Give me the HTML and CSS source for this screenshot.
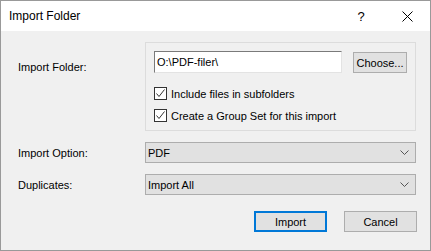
FILE: index.html
```html
<!DOCTYPE html>
<html lang="en">
<head>
    <meta charset="UTF-8">
    <title>Import Folder</title>
    <link rel="stylesheet" href="styles.css">
</head>
<body>

<div class="dialog">
    <div class="titlebar">
        <span class="title">Import Folder</span>
        <span class="tb-btn">?</span>
        <span class="tb-btn">
            <svg width="11" height="11" viewBox="0 0 11 11"><path d="M0.5 0.5 L10.5 10.5 M10.5 0.5 L0.5 10.5" stroke="#000" stroke-width="1" fill="none"/></svg>
        </span>
    </div>

    <div class="content">
        <div class="row">
            <label class="label folder-label">Import Folder:</label>
            <div class="panel">
                <div class="path-row">
                    <input class="textbox" type="text" value="O:\PDF-filer\">
                    <button class="btn choose">Choose...</button>
                </div>
                <div class="check first">
                    <span class="box"><svg width="11" height="11" viewBox="0 0 11 11"><path d="M1.5 5.5 L4 8.5 L9.5 1.5" stroke="#333" stroke-width="1" fill="none"/></svg></span>
                    <span>Include files in subfolders</span>
                </div>
                <div class="check">
                    <span class="box"><svg width="11" height="11" viewBox="0 0 11 11"><path d="M1.5 5.5 L4 8.5 L9.5 1.5" stroke="#333" stroke-width="1" fill="none"/></svg></span>
                    <span>Create a Group Set for this import</span>
                </div>
            </div>
        </div>

        <div class="row combo-row">
            <label class="label">Import Option:</label>
            <div class="combo">
                <span>PDF</span>
                <svg width="9" height="5" viewBox="0 0 9 5"><path d="M0.5 0.5 L4.5 4.5 L8.5 0.5" stroke="#555" stroke-width="1" fill="none"/></svg>
            </div>
        </div>

        <div class="row combo-row second">
            <label class="label">Duplicates:</label>
            <div class="combo">
                <span>Import All</span>
                <svg width="9" height="5" viewBox="0 0 9 5"><path d="M0.5 0.5 L4.5 4.5 L8.5 0.5" stroke="#555" stroke-width="1" fill="none"/></svg>
            </div>
        </div>

        <div class="buttons">
            <button class="btn default">Import</button>
            <button class="btn">Cancel</button>
        </div>
    </div>
</div>

</body>
</html>
```

FILE: styles.css
```css
body {
    margin: 0;
    font-family: "Liberation Sans", Arial, sans-serif;
    font-size: 11px;
    color: #000;
}
.dialog {
    width: 431px;
    height: 251px;
    box-sizing: border-box;
    border: 1px solid #999;
    display: flex;
    flex-direction: column;
    background-color: #f0f0f0;
}
.titlebar {
    height: 30px;
    background-color: #fff;
    display: flex;
    align-items: center;
}
.title {
    flex: 1;
    padding-left: 8px;
    font-size: 12px;
}
.tb-btn {
    width: 46px;
    height: 30px;
    display: flex;
    align-items: center;
    justify-content: center;
    font-size: 13px;
}
.content {
    flex: 1;
    padding: 11px 14px 0 17px;
}
.row {
    display: flex;
}
.label {
    width: 127px;
    line-height: 16px;
}
.folder-label {
    padding-top: 17px;
}
.panel {
    width: 271px;
    height: 89px;
    box-sizing: border-box;
    border: 1px solid #dcdcdc;
    padding: 8px 0 0 8px;
}
.path-row {
    display: flex;
    gap: 11px;
}
.textbox {
    width: 188px;
    height: 22px;
    box-sizing: border-box;
    margin: 0;
    padding: 0 2px;
    border: 1px solid;
    border-color: #7a7a7a #e3e3e3 #e3e3e3 #7a7a7a;
    font-family: inherit;
    font-size: inherit;
    background-color: #fff;
    outline: none;
}
.btn {
    height: 21px;
    box-sizing: border-box;
    margin: 0;
    padding: 0;
    border: 1px solid #adadad;
    background-color: #e1e1e1;
    font-family: inherit;
    font-size: inherit;
    color: #000;
}
.choose {
    width: 54px;
    margin-top: 1px;
}
.check {
    display: flex;
    align-items: center;
    gap: 4px;
    height: 13px;
    margin-top: 9px;
}
.check.first {
    margin-top: 14px;
}
.box {
    width: 13px;
    height: 13px;
    box-sizing: border-box;
    border: 1px solid #333;
    background-color: #fff;
    display: flex;
    align-items: center;
    justify-content: center;
}
.combo-row {
    margin-top: 11px;
    align-items: center;
}
.combo {
    width: 271px;
    height: 21px;
    box-sizing: border-box;
    border: 1px solid #adadad;
    background-color: #e1e1e1;
    display: flex;
    align-items: center;
    justify-content: space-between;
    padding: 0 6px 0 2px;
}
.buttons {
    display: flex;
    justify-content: flex-end;
    gap: 17px;
    margin-top: 16px;
    margin-right: -1px;
}
.buttons .btn {
    width: 73px;
}
.default {
    border: 2px solid #0078d7;
}
```
